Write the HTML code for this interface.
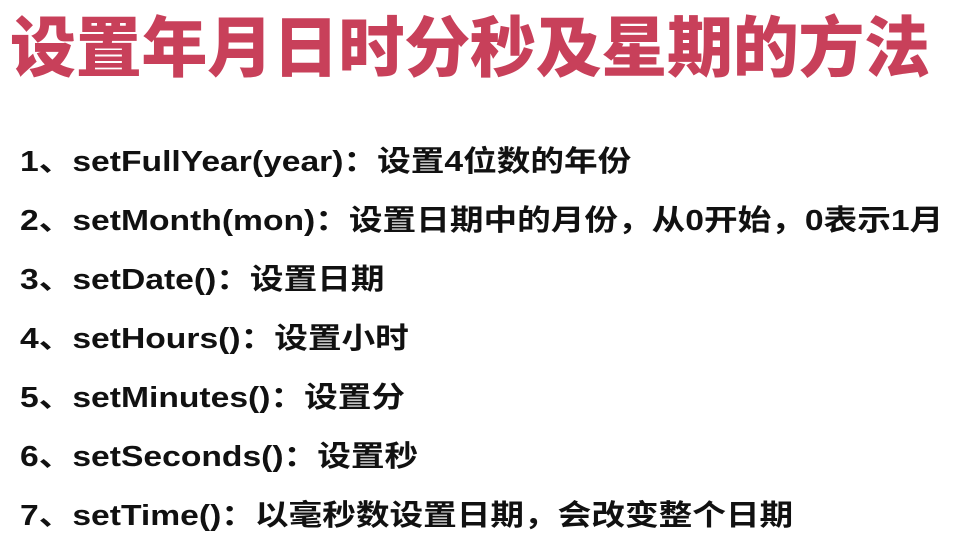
<!DOCTYPE html>
<html><head><meta charset="utf-8"><style>
body{margin:0;width:959px;height:557px;background:#fff;overflow:hidden;position:relative;font-family:"Liberation Sans","Noto Sans CJK SC",sans-serif;}
.t{position:absolute;left:10px;top:6px;font-size:66px;font-weight:900;color:#c8405a;letter-spacing:-0.3px;white-space:nowrap;line-height:84px;}
.l{position:absolute;left:20px;font-size:29px;font-weight:bold;color:#111;white-space:nowrap;line-height:40px;transform:scaleX(1.16);transform-origin:0 0;}
</style></head><body>
<div class="t">设置年月日时分秒及星期的方法</div>
<div class="l" style="top:142px">1、setFullYear(year)：设置4位数的年份</div>
<div class="l" style="top:201px">2、setMonth(mon)：设置日期中的月份，从0开始，0表示1月</div>
<div class="l" style="top:260px">3、setDate()：设置日期</div>
<div class="l" style="top:319px">4、setHours()：设置小时</div>
<div class="l" style="top:378px">5、setMinutes()：设置分</div>
<div class="l" style="top:437px">6、setSeconds()：设置秒</div>
<div class="l" style="top:496px">7、setTime()：以毫秒数设置日期，会改变整个日期</div>
</body></html>
